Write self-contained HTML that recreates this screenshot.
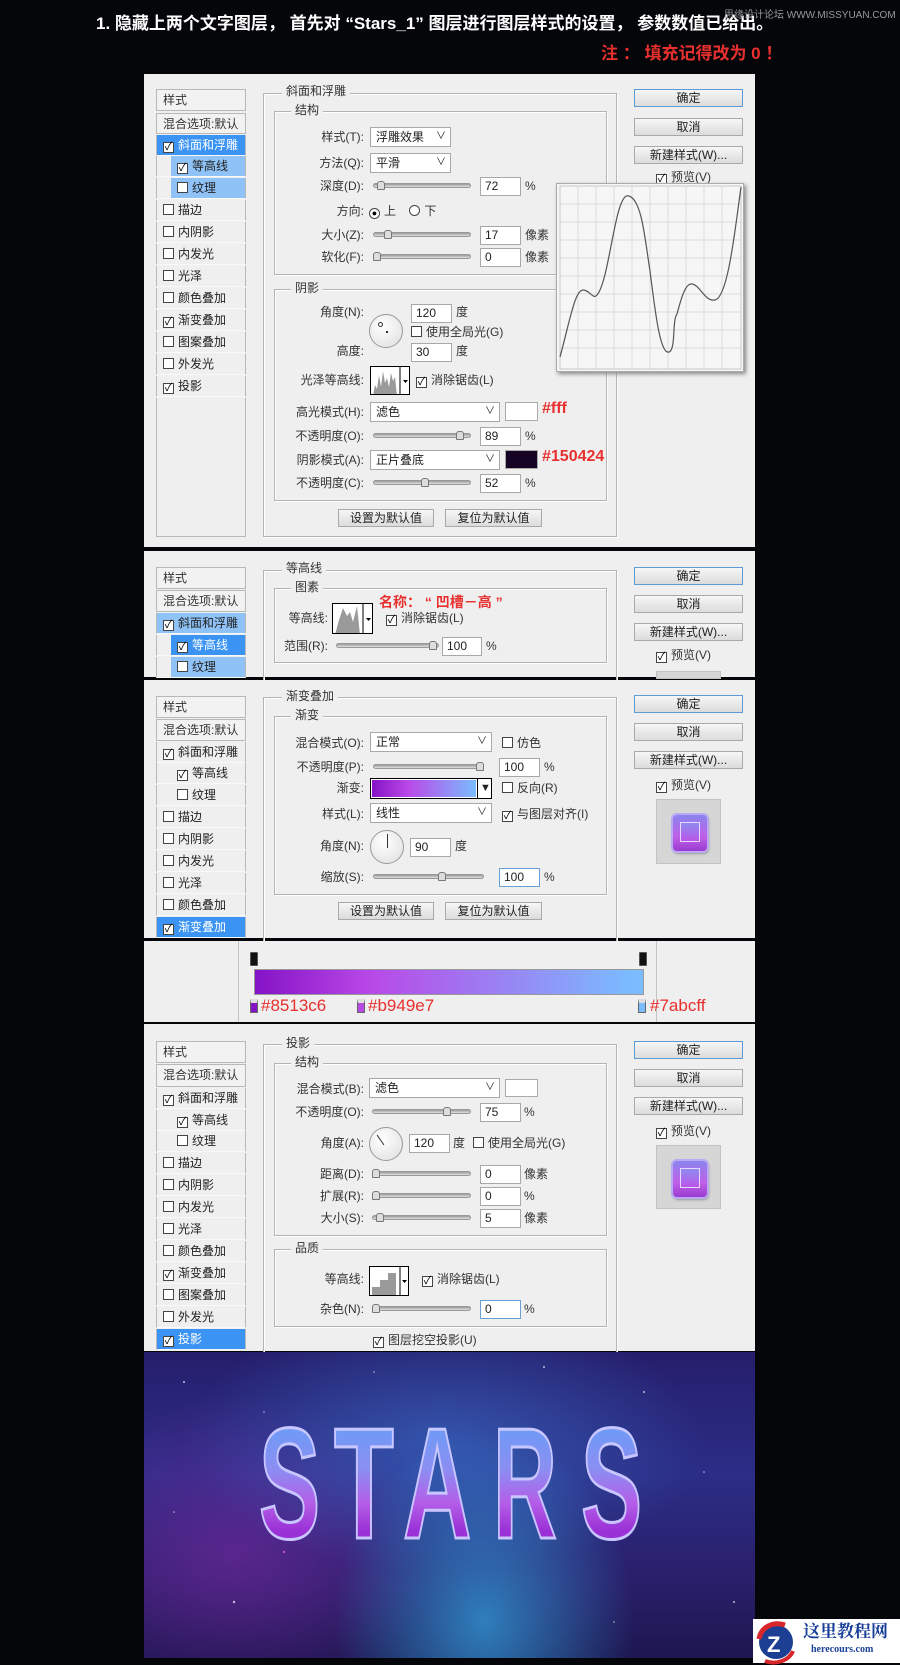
<!DOCTYPE html>
<html><head><meta charset="utf-8"><style>
*{margin:0;padding:0;box-sizing:border-box}
body{width:900px;height:1663px;background:#04060a;position:relative;overflow:hidden;font-family:"Liberation Sans","Noto Sans CJK SC",sans-serif;font-size:12px;color:#222}
div,span{position:absolute}
.p{left:144px;width:611px;background:#efefef;overflow:hidden}
.lb{width:100px;text-align:right;height:20px;line-height:20px;font-size:12px;color:#333}
.t{height:20px;line-height:20px;font-size:12px;color:#333;white-space:nowrap}
.g{border:1px solid #b3b3b3;box-shadow:inset 1px 1px #fff,1px 1px #fff}
.gt{background:#efefef;padding:0 4px;font-size:12px;color:#333;line-height:16px}
.hb{left:156px;width:90px;border:1px solid #b8b8b8;background:#f2f2f2;font-size:12px;line-height:20px;padding-left:6px;color:#333}
.r{left:156px;width:90px;height:21px;line-height:21px;font-size:12px;color:#222;border-bottom:1px solid #f9f9f9;border-left:1px solid #b8b8b8;border-right:1px solid #b8b8b8;white-space:nowrap}
.cb{position:relative;display:inline-block;width:11px;height:11px;border:1px solid #444;background:#fff;vertical-align:-1px;margin-right:4px;font-size:11px;line-height:9px;text-align:center;color:#000}
.dd{height:20px;background:#fff;border:1px solid #a8a8a8;line-height:18px;padding-left:5px;font-size:12px}
.dd:after{content:"∨";position:absolute;right:4px;top:0;font-size:10px}
.sl{height:5px;border-radius:3px;background:linear-gradient(#9a9a9a,#e0e0e0);border:1px solid #999}
.th{width:8px;height:9px;background:#ddd;border:1px solid #777;border-radius:3px 3px 1px 1px;top:-3px}
.in{height:19px;background:#fff;border:1px solid #a8a8a8;line-height:17px;padding-left:4px;font-size:12px}
.bt{height:18px;border:1px solid #a9a9a9;background:linear-gradient(#f6f6f6,#dcdcdc);text-align:center;line-height:16px;font-size:12px;color:#222}
.red{color:#e8302f;font-weight:bold}
.cir{width:34px;height:34px;border-radius:50%;border:1px solid #999;background:radial-gradient(circle at 40% 35%,#fff,#ddd)}
.thumb{border:1px solid #000;background:#fff;overflow:hidden}
.pv{width:65px;height:65px;background:#d6d6d6;border:1px solid #c2c2c2}
.pv i{position:absolute;left:16px;top:15px;width:34px;height:36px;border-radius:4px;background:linear-gradient(#8a85ee,#c060e8 60%,#9a3bd0);box-shadow:0 0 0 2px #b9a8f3,1px 2px 3px #666}
.pv b{position:absolute;left:23px;top:22px;width:20px;height:20px;border:1px solid #e7d8ff;background:linear-gradient(#8f8bf0,#bb55e8)}
.L{top:53px;font-family:"Liberation Sans Narrow","Liberation Sans",sans-serif;font-weight:bold;font-size:158px;line-height:158px;white-space:nowrap;transform-origin:0 0;color:transparent;background:linear-gradient(#6f9af6 15%,#8a8ff2 40%,#b45ee8 62%,#9a30d6 80%);-webkit-background-clip:text;background-clip:text;-webkit-text-stroke:3px #c8c6ff}
</style></head><body>

<div style="left:96px;top:13px;color:#fff;font-size:17px;font-weight:bold;white-space:nowrap;line-height:22px">1. 隐藏上两个文字图层， 首先对 “Stars_1” 图层进行图层样式的设置， 参数数值已给出。</div>
<div style="left:724px;top:6px;color:#999;font-size:10px;white-space:nowrap">思缘设计论坛 WWW.MISSYUAN.COM</div>
<div class="red" style="left:601px;top:43px;font-size:17px;white-space:nowrap;line-height:22px">注 ： 填充记得改为 0 ！</div>

<!-- PANEL 1 -->
<div class="p" style="top:74px;height:473px"></div>
<div class="hb" style="top:89px;height:22px">样式</div>
<div class="hb" style="top:113px;height:21px">混合选项:默认</div>
<div class="r" style="top:135px;background:#3b93f3;color:#fff;padding-left:6px"><span class="cb" style="position:relative">✓</span>斜面和浮雕</div>
<div class="r" style="top:156px;padding-left:20px;background:linear-gradient(90deg,#efefef 14px,#8fc2f6 14px)"><span class="cb" style="position:relative">✓</span>等高线</div>
<div class="r" style="top:178px;padding-left:20px;background:linear-gradient(90deg,#efefef 14px,#8fc2f6 14px)"><span class="cb" style="position:relative"></span>纹理</div>
<div class="r" style="top:200px;padding-left:6px"><span class="cb" style="position:relative"></span>描边</div>
<div class="r" style="top:222px;padding-left:6px"><span class="cb" style="position:relative"></span>内阴影</div>
<div class="r" style="top:244px;padding-left:6px"><span class="cb" style="position:relative"></span>内发光</div>
<div class="r" style="top:266px;padding-left:6px"><span class="cb" style="position:relative"></span>光泽</div>
<div class="r" style="top:288px;padding-left:6px"><span class="cb" style="position:relative"></span>颜色叠加</div>
<div class="r" style="top:310px;padding-left:6px"><span class="cb" style="position:relative">✓</span>渐变叠加</div>
<div class="r" style="top:332px;padding-left:6px"><span class="cb" style="position:relative"></span>图案叠加</div>
<div class="r" style="top:354px;padding-left:6px"><span class="cb" style="position:relative"></span>外发光</div>
<div class="r" style="top:376px;padding-left:6px"><span class="cb" style="position:relative">✓</span>投影</div>
<div class="r" style="top:398px;height:139px;border-bottom:1px solid #b8b8b8"></div>

<div class="g" style="left:263px;top:93px;width:354px;height:444px"></div>
<div class="gt" style="left:282px;top:83px">斜面和浮雕</div>
<div class="g" style="left:274px;top:111px;width:333px;height:164px"></div>
<div class="gt" style="left:291px;top:102px">结构</div>
<div class="lb" style="left:264px;top:127px">样式(T):</div><div class="dd" style="left:370px;top:127px;width:81px">浮雕效果</div>
<div class="lb" style="left:264px;top:153px">方法(Q):</div><div class="dd" style="left:370px;top:153px;width:81px">平滑</div>
<div class="lb" style="left:264px;top:176px">深度(D):</div><div class="sl" style="left:373px;top:183px;width:98px"><span class="th" style="left:3px"></span></div><div class="in" style="left:480px;top:177px;width:41px">72</div><div class="t" style="left:525px;top:176px">%</div>
<div class="lb" style="left:264px;top:201px">方向:</div><div class="t" style="left:369px;top:201px"><span class="cb" style="position:relative;border-radius:50%;font-size:9px">●</span>上 &nbsp;&nbsp;&nbsp;<span class="cb" style="position:relative;border-radius:50%"></span>下</div>
<div class="lb" style="left:264px;top:225px">大小(Z):</div><div class="sl" style="left:373px;top:232px;width:98px"><span class="th" style="left:10px"></span></div><div class="in" style="left:480px;top:226px;width:41px">17</div><div class="t" style="left:525px;top:225px">像素</div>
<div class="lb" style="left:264px;top:247px">软化(F):</div><div class="sl" style="left:373px;top:254px;width:98px"><span class="th" style="left:-1px"></span></div><div class="in" style="left:480px;top:248px;width:41px">0</div><div class="t" style="left:525px;top:247px">像素</div>

<div class="g" style="left:274px;top:289px;width:333px;height:212px"></div>
<div class="gt" style="left:291px;top:280px">阴影</div>
<div class="lb" style="left:264px;top:302px">角度(N):</div>
<div class="cir" style="left:369px;top:314px"><span style="left:8px;top:7px;width:5px;height:5px;border:1px solid #333;border-radius:50%"></span><span style="left:16px;top:16px;width:2px;height:2px;background:#333"></span></div>
<div class="in" style="left:411px;top:304px;width:41px">120</div><div class="t" style="left:456px;top:302px">度</div>
<div class="t" style="left:411px;top:322px"><span class="cb" style="position:relative"></span>使用全局光(G)</div>
<div class="lb" style="left:264px;top:341px">高度:</div><div class="in" style="left:411px;top:343px;width:41px">30</div><div class="t" style="left:456px;top:341px">度</div>
<div class="lb" style="left:264px;top:370px">光泽等高线:</div>
<div class="thumb" style="left:370px;top:366px;width:40px;height:29px"><svg width="40" height="29"><path d="M2,29 L4,18 L6,22 L8,8 L10,20 L12,4 L14,16 L16,11 L18,20 L20,6 L22,14 L24,10 L26,29Z" fill="#9a9a9a"/><line x1="29" y1="0" x2="29" y2="29" stroke="#000"/><path d="M32,13 l5,0 l-2.5,3z" fill="#000"/></svg></div>
<div class="t" style="left:416px;top:370px"><span class="cb" style="position:relative">✓</span>消除锯齿(L)</div>
<div class="lb" style="left:264px;top:402px">高光模式(H):</div><div class="dd" style="left:370px;top:402px;width:130px">滤色</div><div style="left:505px;top:402px;width:33px;height:19px;background:#fff;border:1px solid #aaa"></div><div class="red" style="left:542px;top:400px;font-size:16px">#fff</div>
<div class="lb" style="left:264px;top:426px">不透明度(O):</div><div class="sl" style="left:373px;top:433px;width:98px"><span class="th" style="left:82px"></span></div><div class="in" style="left:480px;top:427px;width:41px">89</div><div class="t" style="left:525px;top:426px">%</div>
<div class="lb" style="left:264px;top:450px">阴影模式(A):</div><div class="dd" style="left:370px;top:450px;width:130px">正片叠底</div><div style="left:505px;top:450px;width:33px;height:19px;background:#150424;border:1px solid #aaa"></div><div class="red" style="left:542px;top:448px;font-size:16px">#150424</div>
<div class="lb" style="left:264px;top:473px">不透明度(C):</div><div class="sl" style="left:373px;top:480px;width:98px"><span class="th" style="left:47px"></span></div><div class="in" style="left:480px;top:474px;width:41px">52</div><div class="t" style="left:525px;top:473px">%</div>
<div class="bt" style="left:338px;top:509px;width:96px">设置为默认值</div>
<div class="bt" style="left:445px;top:509px;width:97px">复位为默认值</div>
<div class="bt" style="left:634px;top:89px;width:109px;border-color:#5a9bd8">确定</div>
<div class="bt" style="left:634px;top:118px;width:109px">取消</div>
<div class="bt" style="left:634px;top:146px;width:109px">新建样式(W)...</div>
<div class="t" style="left:656px;top:167px"><span class="cb" style="position:relative">✓</span>预览(V)</div>
<div style="left:556px;top:183px;width:188px;height:189px;background:#f6f6f6;border:1px solid #aaa;box-shadow:2px 2px 4px #888">
<svg width="188" height="189" viewBox="556 183 188 189" style="position:absolute;left:-1px;top:-1px">
<g stroke="#dcdcdc" stroke-width="1"><path d="M578,186V369M596,186V369M614,186V369M632,186V369M650,186V369M668,186V369M686,186V369M704,186V369M722,186V369M560,204H741M560,222H741M560,240H741M560,258H741M560,276H741M560,294H741M560,312H741M560,330H741M560,348H741"/></g>
<rect x="560" y="186" width="181" height="183" fill="none" stroke="#c8c8c8"/>
<path d="M560,357 C570,320 575,290 583,290 C590,290 593,300 597,295 C610,280 615,190 629,196 C642,200 645,240 650,271 C655,310 660,355 669,352 C676,350 672,320 677,314 C682,295 686,283 692,284 C700,285 705,302 715,300 C728,297 735,230 741,187" fill="none" stroke="#555" stroke-width="1.2"/>
</svg></div>

<!-- PANEL 2 -->
<div class="p" style="top:551px;height:126px"></div>
<div class="hb" style="top:567px;height:22px">样式</div>
<div class="hb" style="top:590px;height:22px">混合选项:默认</div>
<div class="r" style="top:613px;background:#8fc2f6;padding-left:6px"><span class="cb" style="position:relative">✓</span>斜面和浮雕</div>
<div class="r" style="top:635px;padding-left:20px;background:linear-gradient(90deg,#efefef 14px,#3b93f3 14px);color:#fff"><span class="cb" style="position:relative">✓</span>等高线</div>
<div class="r" style="top:657px;padding-left:20px;background:linear-gradient(90deg,#efefef 14px,#8fc2f6 14px)"><span class="cb" style="position:relative"></span>纹理</div>
<div class="g" style="left:263px;top:570px;width:354px;height:120px"></div>
<div class="gt" style="left:282px;top:560px">等高线</div>
<div class="g" style="left:274px;top:588px;width:333px;height:75px"></div>
<div class="gt" style="left:291px;top:579px">图素</div>
<div class="lb" style="left:228px;top:608px">等高线:</div>
<div class="thumb" style="left:332px;top:603px;width:41px;height:31px"><svg width="41" height="31"><path d="M2,31 L6,16 L10,4 L14,12 L17,8 L20,18 L24,2 L27,31Z" fill="#9a9a9a"/><line x1="30" y1="0" x2="30" y2="31" stroke="#000"/><path d="M33,14 l5,0 l-2.5,3z" fill="#000"/></svg></div>
<div class="red" style="left:379px;top:592px;font-size:14px;white-space:nowrap">名称： “ 凹槽－高 ”</div>
<div class="t" style="left:386px;top:608px"><span class="cb" style="position:relative">✓</span>消除锯齿(L)</div>
<div class="lb" style="left:228px;top:636px">范围(R):</div><div class="sl" style="left:336px;top:643px;width:103px"><span class="th" style="left:92px"></span></div><div class="in" style="left:442px;top:637px;width:40px">100</div><div class="t" style="left:486px;top:636px">%</div>
<div class="bt" style="left:634px;top:567px;width:109px;border-color:#5a9bd8">确定</div>
<div class="bt" style="left:634px;top:595px;width:109px">取消</div>
<div class="bt" style="left:634px;top:623px;width:109px">新建样式(W)...</div>
<div class="t" style="left:656px;top:645px"><span class="cb" style="position:relative">✓</span>预览(V)</div>
<div style="left:656px;top:671px;width:65px;height:8px;background:#d6d6d6;border:1px solid #c2c2c2"></div>

<!-- PANEL 3 -->
<div class="p" style="top:680px;height:258px"></div>
<div class="hb" style="top:696px;height:22px">样式</div>
<div class="hb" style="top:719px;height:22px">混合选项:默认</div>
<div class="r" style="top:742px;padding-left:6px"><span class="cb" style="position:relative">✓</span>斜面和浮雕</div>
<div class="r" style="top:763px;padding-left:20px"><span class="cb" style="position:relative">✓</span>等高线</div>
<div class="r" style="top:785px;padding-left:20px"><span class="cb" style="position:relative"></span>纹理</div>
<div class="r" style="top:807px;padding-left:6px"><span class="cb" style="position:relative"></span>描边</div>
<div class="r" style="top:829px;padding-left:6px"><span class="cb" style="position:relative"></span>内阴影</div>
<div class="r" style="top:851px;padding-left:6px"><span class="cb" style="position:relative"></span>内发光</div>
<div class="r" style="top:873px;padding-left:6px"><span class="cb" style="position:relative"></span>光泽</div>
<div class="r" style="top:895px;padding-left:6px"><span class="cb" style="position:relative"></span>颜色叠加</div>
<div class="r" style="top:917px;background:#3b93f3;color:#fff;padding-left:6px"><span class="cb" style="position:relative">✓</span>渐变叠加</div>
<div class="g" style="left:263px;top:697px;width:354px;height:260px"></div>
<div class="gt" style="left:282px;top:688px">渐变叠加</div>
<div class="g" style="left:274px;top:716px;width:333px;height:179px"></div>
<div class="gt" style="left:291px;top:707px">渐变</div>
<div class="lb" style="left:264px;top:733px">混合模式(O):</div><div class="dd" style="left:370px;top:732px;width:122px">正常</div><div class="t" style="left:502px;top:733px"><span class="cb" style="position:relative"></span>仿色</div>
<div class="lb" style="left:264px;top:757px">不透明度(P):</div><div class="sl" style="left:373px;top:764px;width:111px"><span class="th" style="left:102px"></span></div><div class="in" style="left:499px;top:758px;width:41px">100</div><div class="t" style="left:544px;top:757px">%</div>
<div class="lb" style="left:264px;top:778px">渐变:</div><div style="left:370px;top:778px;width:122px;height:21px;border:1px solid #000;background:#fff"><span style="left:1px;top:1px;width:104px;height:17px;background:linear-gradient(90deg,#8513c6,#b949e7 35%,#7abcff)"></span><span style="left:106px;top:0;width:1px;height:19px;background:#000"></span><span style="left:109px;top:0;font-size:11px;line-height:19px">▼</span></div>
<div class="t" style="left:502px;top:778px"><span class="cb" style="position:relative"></span>反向(R)</div>
<div class="lb" style="left:264px;top:804px">样式(L):</div><div class="dd" style="left:370px;top:803px;width:122px">线性</div><div class="t" style="left:502px;top:804px"><span class="cb" style="position:relative">✓</span>与图层对齐(I)</div>
<div class="lb" style="left:264px;top:836px">角度(N):</div><div class="cir" style="left:370px;top:830px"><span style="left:16px;top:3px;width:1px;height:14px;background:#333"></span></div><div class="in" style="left:410px;top:838px;width:41px">90</div><div class="t" style="left:455px;top:836px">度</div>
<div class="lb" style="left:264px;top:867px">缩放(S):</div><div class="sl" style="left:373px;top:874px;width:111px"><span class="th" style="left:64px"></span></div><div class="in" style="left:499px;top:868px;width:41px;border-color:#6aa0d8">100</div><div class="t" style="left:544px;top:867px">%</div>
<div class="bt" style="left:338px;top:902px;width:96px">设置为默认值</div>
<div class="bt" style="left:445px;top:902px;width:97px">复位为默认值</div>
<div class="bt" style="left:634px;top:695px;width:109px;border-color:#5a9bd8">确定</div>
<div class="bt" style="left:634px;top:723px;width:109px">取消</div>
<div class="bt" style="left:634px;top:751px;width:109px">新建样式(W)...</div>
<div class="t" style="left:656px;top:775px"><span class="cb" style="position:relative">✓</span>预览(V)</div>
<div class="pv" style="left:656px;top:799px"><i></i><b></b></div>

<!-- GRADIENT STRIP -->
<div class="p" style="top:941px;height:81px"></div>
<div style="left:238px;top:941px;width:1px;height:81px;background:#c4c4c4"></div>
<div style="left:656px;top:941px;width:1px;height:81px;background:#c4c4c4"></div>
<div style="left:250px;top:952px;width:8px;height:14px;background:#111;border:1px solid #555;border-radius:1px"></div>
<div style="left:639px;top:952px;width:8px;height:14px;background:#111;border:1px solid #555;border-radius:1px"></div>
<div style="left:254px;top:969px;width:390px;height:26px;border:1px solid #999;background:linear-gradient(90deg,#8513c6,#b949e7 30%,#7abcff 97%)"></div>
<div style="left:250px;top:999px;width:8px;height:14px;background:#8513c6;border:1px solid #666;border-top:4px solid #ddd"></div>
<div style="left:357px;top:999px;width:8px;height:14px;background:#b949e7;border:1px solid #666;border-top:4px solid #ddd"></div>
<div style="left:638px;top:999px;width:8px;height:14px;background:#7abcff;border:1px solid #666;border-top:4px solid #ddd"></div>
<div class="red" style="left:261px;top:996px;font-size:17px;font-weight:normal">#8513c6</div>
<div class="red" style="left:368px;top:996px;font-size:17px;font-weight:normal">#b949e7</div>
<div class="red" style="left:650px;top:996px;font-size:17px;font-weight:normal">#7abcff</div>

<!-- PANEL 5 -->
<div class="p" style="top:1024px;height:327px"></div>
<div class="hb" style="top:1041px;height:22px">样式</div>
<div class="hb" style="top:1064px;height:23px">混合选项:默认</div>
<div class="r" style="top:1088px;padding-left:6px"><span class="cb" style="position:relative">✓</span>斜面和浮雕</div>
<div class="r" style="top:1110px;padding-left:20px"><span class="cb" style="position:relative">✓</span>等高线</div>
<div class="r" style="top:1131px;padding-left:20px"><span class="cb" style="position:relative"></span>纹理</div>
<div class="r" style="top:1153px;padding-left:6px"><span class="cb" style="position:relative"></span>描边</div>
<div class="r" style="top:1175px;padding-left:6px"><span class="cb" style="position:relative"></span>内阴影</div>
<div class="r" style="top:1197px;padding-left:6px"><span class="cb" style="position:relative"></span>内发光</div>
<div class="r" style="top:1219px;padding-left:6px"><span class="cb" style="position:relative"></span>光泽</div>
<div class="r" style="top:1241px;padding-left:6px"><span class="cb" style="position:relative"></span>颜色叠加</div>
<div class="r" style="top:1263px;padding-left:6px"><span class="cb" style="position:relative">✓</span>渐变叠加</div>
<div class="r" style="top:1285px;padding-left:6px"><span class="cb" style="position:relative"></span>图案叠加</div>
<div class="r" style="top:1307px;padding-left:6px"><span class="cb" style="position:relative"></span>外发光</div>
<div class="r" style="top:1329px;background:#3b93f3;color:#fff;padding-left:6px"><span class="cb" style="position:relative">✓</span>投影</div>
<div class="g" style="left:263px;top:1044px;width:354px;height:320px"></div>
<div class="gt" style="left:282px;top:1035px">投影</div>
<div class="g" style="left:274px;top:1063px;width:333px;height:173px"></div>
<div class="gt" style="left:291px;top:1054px">结构</div>
<div class="lb" style="left:264px;top:1079px">混合模式(B):</div><div class="dd" style="left:369px;top:1078px;width:131px">滤色</div><div style="left:505px;top:1079px;width:33px;height:18px;background:#fff;border:1px solid #aaa"></div>
<div class="lb" style="left:264px;top:1102px">不透明度(O):</div><div class="sl" style="left:372px;top:1109px;width:99px"><span class="th" style="left:70px"></span></div><div class="in" style="left:480px;top:1103px;width:41px">75</div><div class="t" style="left:524px;top:1102px">%</div>
<div class="lb" style="left:264px;top:1133px">角度(A):</div><div class="cir" style="left:369px;top:1127px"><span style="left:10px;top:6px;width:1px;height:12px;background:#333;transform:rotate(-35deg)"></span></div><div class="in" style="left:409px;top:1134px;width:41px">120</div><div class="t" style="left:453px;top:1133px">度</div><div class="t" style="left:473px;top:1133px"><span class="cb" style="position:relative"></span>使用全局光(G)</div>
<div class="lb" style="left:264px;top:1164px">距离(D):</div><div class="sl" style="left:372px;top:1171px;width:99px"><span class="th" style="left:-1px"></span></div><div class="in" style="left:480px;top:1165px;width:41px">0</div><div class="t" style="left:524px;top:1164px">像素</div>
<div class="lb" style="left:264px;top:1186px">扩展(R):</div><div class="sl" style="left:372px;top:1193px;width:99px"><span class="th" style="left:-1px"></span></div><div class="in" style="left:480px;top:1187px;width:41px">0</div><div class="t" style="left:524px;top:1186px">%</div>
<div class="lb" style="left:264px;top:1208px">大小(S):</div><div class="sl" style="left:372px;top:1215px;width:99px"><span class="th" style="left:3px"></span></div><div class="in" style="left:480px;top:1209px;width:41px">5</div><div class="t" style="left:524px;top:1208px">像素</div>
<div class="g" style="left:274px;top:1249px;width:333px;height:78px"></div>
<div class="gt" style="left:291px;top:1240px">品质</div>
<div class="lb" style="left:264px;top:1269px">等高线:</div>
<div class="thumb" style="left:369px;top:1266px;width:40px;height:30px"><svg width="40" height="30"><path d="M2,30 V20 H10 V13 H18 V6 H26 V30Z" fill="#9a9a9a"/><line x1="30" y1="0" x2="30" y2="30" stroke="#000"/><path d="M32,13 l5,0 l-2.5,3z" fill="#000"/></svg></div>
<div class="t" style="left:422px;top:1269px"><span class="cb" style="position:relative">✓</span>消除锯齿(L)</div>
<div class="lb" style="left:264px;top:1299px">杂色(N):</div><div class="sl" style="left:372px;top:1306px;width:99px"><span class="th" style="left:-1px"></span></div><div class="in" style="left:480px;top:1300px;width:41px;border-color:#6aa0d8">0</div><div class="t" style="left:524px;top:1299px">%</div>
<div class="t" style="left:373px;top:1330px"><span class="cb" style="position:relative">✓</span>图层挖空投影(U)</div>
<div class="bt" style="left:634px;top:1041px;width:109px;border-color:#5a9bd8">确定</div>
<div class="bt" style="left:634px;top:1069px;width:109px">取消</div>
<div class="bt" style="left:634px;top:1097px;width:109px">新建样式(W)...</div>
<div class="t" style="left:656px;top:1121px"><span class="cb" style="position:relative">✓</span>预览(V)</div>
<div class="pv" style="left:656px;top:1145px;height:64px"><i></i><b></b></div>

<!-- STARS IMAGE -->
<div style="left:144px;top:1352px;width:611px;height:306px;overflow:hidden;background:radial-gradient(ellipse 150px 190px at 340px 270px,rgba(50,160,220,0.75),rgba(40,90,190,0) 100%),radial-gradient(ellipse 260px 130px at 300px 90px,rgba(60,120,210,0.55),rgba(0,0,0,0)),radial-gradient(ellipse 200px 160px at 90px 200px,rgba(120,40,160,0.6),rgba(0,0,0,0)),linear-gradient(#261e6c,#2b2d86 40%,#2a1f6a 75%,#1d1650)">
<svg width="611" height="306" style="position:absolute;left:0;top:0"><g fill="#fff" opacity="0.7"><circle cx="40" cy="30" r="1"/><circle cx="120" cy="60" r="0.8"/><circle cx="500" cy="40" r="1"/><circle cx="560" cy="120" r="0.8"/><circle cx="90" cy="250" r="1.2"/><circle cx="470" cy="270" r="0.8"/><circle cx="230" cy="20" r="0.8"/><circle cx="400" cy="15" r="1"/><circle cx="30" cy="160" r="0.8"/><circle cx="590" cy="250" r="1"/><circle cx="140" cy="200" r="1.2" fill="#f6c"/></g></svg>
<div class="L" style="left:115px;transform:scaleX(0.58)">S</div>
<div class="L" style="left:190px;transform:scaleX(0.62)">T</div>
<div class="L" style="left:259px;transform:scaleX(0.6)">A</div>
<div class="L" style="left:349px;transform:scaleX(0.56)">R</div>
<div class="L" style="left:437px;transform:scaleX(0.58)">S</div>
</div>

<!-- LOGO -->
<div style="left:753px;top:1619px;width:147px;height:44px;background:#fff">
<svg width="44" height="44" style="position:absolute;left:2px;top:2px"><circle cx="21" cy="21" r="17" fill="#1d3f93"/><path d="M4,18 C6,6 18,0 30,4" stroke="#d8262b" stroke-width="5" fill="none"/><path d="M10,40 C20,44 34,40 38,30" stroke="#d8262b" stroke-width="4" fill="none"/><text x="12" y="31" font-family="Liberation Sans" font-weight="bold" font-size="22" fill="#fff">Z</text></svg>
<div style="left:50px;top:3px;color:#1a3f9a;font-weight:bold;font-size:17px;font-family:'Liberation Serif','Noto Serif CJK SC',serif;white-space:nowrap;line-height:20px">这里教程网</div>
<div style="left:58px;top:25px;color:#1a3f9a;font-weight:bold;font-size:10px;font-family:'Liberation Serif',serif;white-space:nowrap">herecours.com</div>
</div>
</body></html>
